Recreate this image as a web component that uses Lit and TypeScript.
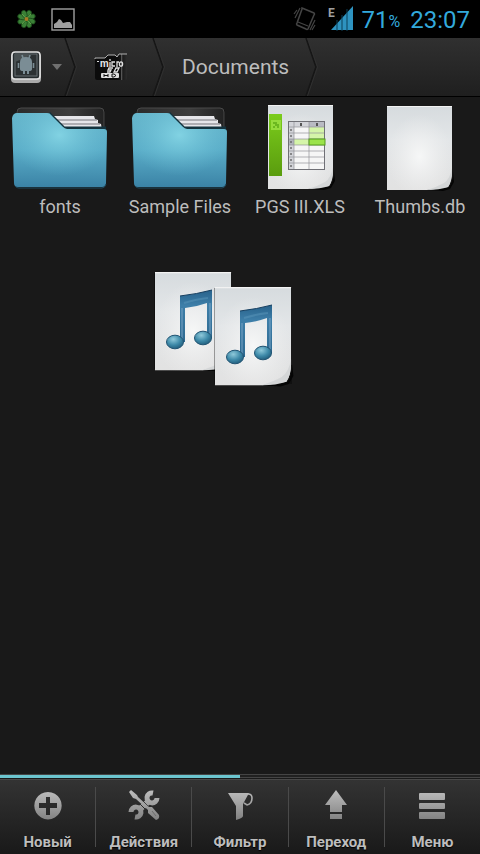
import { LitElement, html, svg, css, TemplateResult, SVGTemplateResult } from "lit";
import { customElement, property } from "lit/decorators.js";

type Kind = "folder" | "sheet" | "file";

const PAGE = "M0 0H65V66Q65 75 61 81Q50 83 40 84H0Z";

const folderIcon = () => svg`
  <rect x="4" y="9" width="89" height="78" rx="4" fill="#0a0a0a" opacity="0.6"></rect>
  <path d="M5 16V12Q5 8 9 8H88Q92 8 92 12V34H5Z" fill="url(#folder-back)" stroke="#4a4a4a" stroke-width="1"></path>
  <path d="M40 16H82L83 19L86 20V23L89 24L90 30H52Z" fill="#e6e6ea"></path>
  <path d="M44 20H85M47 24H88" stroke="#77777c" stroke-width="1"></path>
  <path d="M37 13L52 28H94" fill="none" stroke="#14333e" stroke-width="3"></path>
  <path d="M0 18Q1 13 5 13H35Q38 13 39 15L51 27Q53 29 55 29H92Q95 29 95 32L94 83Q94 87 90 87H6Q2 87 2 83Z" fill="url(#folder-front)"></path>
  <path d="M0 18Q1 13 5 13H35Q38 13 39 15L51 27Q53 29 55 29H92Q95 29 95 32L94 83Q94 87 90 87H6Q2 87 2 83Z" fill="url(#folder-glow)"></path>
  <path d="M3 86Q4 88 7 88H90Q93 88 94 84" fill="none" stroke="#1d4a5e" stroke-width="1"></path>`;

const page = () => svg`
  <path d="M40 84Q54 84 62 81Q66 76 66 66L67 76L63 83L56 85Z" fill="#050505"></path>
  <path d=${PAGE} fill="url(#paper)"></path>
  <path d=${PAGE} fill="url(#paper-glow)"></path>
  <path d="M65 62Q63 73 57 77Q50 81 40 84Q52 84 61 81Q65 75 65 66Z" fill="#d4d6d7"></path>
  <path d="M0 0.5H65" stroke="#f2f2f2" stroke-width="1"></path>`;

const sheetIcon = () => svg`
  <g transform="translate(16 5)">${page()}</g>
  <rect x="17" y="14" width="13" height="62" fill="url(#green)"></rect>
  <rect x="19" y="20" width="10" height="10" fill="#95dc3c"></rect>
  <path d="M21 22H25V24H27V28H25V26H23V28H21V26H23V24H21Z" fill="#6cb820"></path>
  <rect x="36" y="21" width="37" height="48" fill="#f6f6f6"></rect>
  <path d="M36 21H73V27H42V69H36Z" fill="#d3d4d9"></path>
  <rect x="57" y="21" width="16" height="6" fill="#b9bbc3"></rect>
  <rect x="36" y="39" width="6" height="6" fill="#b0b3ba"></rect>
  <rect x="57" y="27" width="16" height="12" fill="#d5f5a9"></rect>
  <rect x="42" y="39" width="15" height="6" fill="#d5f5a9"></rect>
  <path d="M36 27H73M36 33H73M36 39H73M36 45H73M36 51H73M36 57H73M36 63H73M42 21V69M57 21V69" stroke="#94949a" stroke-width="0.7"></path>
  <rect x="36.5" y="21.5" width="36" height="48" fill="none" stroke="#707076" stroke-width="1"></rect>
  <rect x="57" y="39" width="16" height="6" fill="#9be34a" stroke="#549b1c" stroke-width="1"></rect>
  <path d="M49 23V26M65 23V26" stroke="#555" stroke-width="2"></path>
  <path d="M39 29V67" stroke="#666" stroke-width="1.4" stroke-dasharray="2 4"></path>`;

const fileIcon = () => svg`<g transform="translate(15 6)">${page()}</g>`;

const musicPage = () => svg`
  <rect x="-1" y="1" width="78" height="96" fill="#000" opacity="0.35"></rect>
  <g transform="scale(1.17)">${page()}</g>
  <path d="M25 24Q42 22 57 18V66H52V31Q41 35 30 36V70H25Z" fill="url(#note)"></path>
  <path d="M27 36V68M55 31V64" stroke="#78a4c6" stroke-width="1"></path>
  <path d="M25 24Q42 22 57 18" stroke="#173f60" stroke-width="1" fill="none"></path>
  <path d="M29 31Q42 27 53 26" stroke="#5a95ba" stroke-width="2" fill="none" opacity="0.5"></path>
  <ellipse cx="20" cy="70" rx="8.500" ry="6.800" fill="url(#note-head)" stroke="#205372" stroke-width="1"></ellipse>
  <ellipse cx="48" cy="66" rx="8.500" ry="6.800" fill="url(#note-head)" stroke="#205372" stroke-width="1"></ellipse>`;

const gradients = svg`
  <linearGradient id="folder-back" x1="0" y1="0" x2="1" y2="0"><stop offset="0" stop-color="#2b2b2b"></stop><stop offset="0.6" stop-color="#3d3d3d"></stop><stop offset="1" stop-color="#222"></stop></linearGradient>
  <linearGradient id="folder-front" x1="0" y1="0" x2="0" y2="1"><stop offset="0" stop-color="#66b5cb"></stop><stop offset="0.5" stop-color="#5aadc8"></stop><stop offset="1" stop-color="#3b83a6"></stop></linearGradient>
  <radialGradient id="folder-glow" cx="0.5" cy="0.3" r="0.55"><stop offset="0" stop-color="#8adbe9" stop-opacity="0.8"></stop><stop offset="1" stop-color="#6cc0d6" stop-opacity="0"></stop></radialGradient>
  <linearGradient id="paper" x1="0" y1="0" x2="0" y2="1"><stop offset="0" stop-color="#d6dbde"></stop><stop offset="0.4" stop-color="#e3e6e8"></stop><stop offset="1" stop-color="#e2e2e2"></stop></linearGradient>
  <radialGradient id="paper-glow" cx="0.5" cy="0.6" r="0.5"><stop offset="0" stop-color="#f6f7f7"></stop><stop offset="1" stop-color="#f0f0f0" stop-opacity="0"></stop></radialGradient>
  <linearGradient id="green" x1="0" y1="0" x2="0" y2="1"><stop offset="0" stop-color="#7bcc1c"></stop><stop offset="1" stop-color="#5a9c0e"></stop></linearGradient>
  <linearGradient id="note" x1="0" y1="0" x2="0" y2="1"><stop offset="0" stop-color="#28628b"></stop><stop offset="0.3" stop-color="#3e7fa9"></stop><stop offset="1" stop-color="#2d688f"></stop></linearGradient>
  <radialGradient id="note-head" cx="0.4" cy="0.3" r="0.7"><stop offset="0" stop-color="#8fc9da"></stop><stop offset="0.6" stop-color="#3d89a8"></stop><stop offset="1" stop-color="#23607f"></stop></radialGradient>
  <linearGradient id="metal" gradientUnits="userSpaceOnUse" x1="0" y1="2" x2="0" y2="30"><stop offset="0" stop-color="#bcbcbc"></stop><stop offset="1" stop-color="#838383"></stop></linearGradient>`;

const pictures: Record<Kind, () => SVGTemplateResult> = {
  folder: folderIcon,
  sheet: sheetIcon,
  file: fileIcon,
};

const entries: { name: string; kind: Kind }[] = [
  { name: "fonts", kind: "folder" },
  { name: "Sample Files", kind: "folder" },
  { name: "PGS III.XLS", kind: "sheet" },
  { name: "Thumbs.db", kind: "file" },
];

const actions: { label: string; icon: SVGTemplateResult }[] = [
  {
    label: "Новый",
    icon: svg`<path fill-rule="evenodd" d="M16 3A13.7 13.7 0 1 1 15.99 3ZM14 8V14H7V19H14V26H18V19H25V14H18V8Z"></path>`,
  },
  {
    label: "Действия",
    icon: svg`
      <g fill="none" stroke="url(#metal)">
        <path d="M25 4A5 5 0 1 0 29 9" stroke-width="5"></path>
        <path d="M7 28A5 5 0 1 0 3 23" stroke-width="5"></path>
        <path d="M21 12L11 21" stroke-width="6"></path>
      </g>
      <path d="M14 11L22 19" stroke="#2a2a2a" stroke-width="1" fill="none"></path>
      <path d="M10 13L18 21" stroke="#2a2a2a" stroke-width="1" fill="none"></path>
      <path d="M1 3L3 1L9 6L10 8L21 18L24 18L31 26Q32 30 28 31L20 24V21L8 10L5 9Z"></path>
      <path d="M24 22L28 27" stroke="#6d6d6d" stroke-width="1" fill="none"></path>`,
  },
  {
    label: "Фильтр",
    icon: svg`
      <path d="M4 4H25L19 15V27Q19 29 12 31V17Z"></path>
      <path d="M24 5Q28 5 28 9Q28 15 23 16L20 14" fill="none" stroke="url(#metal)" stroke-width="1.600"></path>`,
  },
  { label: "Переход", icon: svg`<path d="M16 1L27 16H22V23H10V16H5ZM10 25H22V30H10Z"></path>` },
  {
    label: "Меню",
    icon: svg`<rect x="3" y="4" width="26" height="7" rx="1"></rect><rect x="3" y="14" width="26" height="6" rx="1"></rect><rect x="3" y="23" width="26" height="7" rx="1"></rect>`,
  },
];

const textReset = css`
  :host { font-family: Roboto, "Noto Sans", sans-serif; }
  button, a { font: inherit; color: inherit; text-decoration: none; background: none; border: 0; padding: 0; margin: 0; }
  svg { display: block; flex: none; }
`;

@customElement("status-bar")
export class StatusBar extends LitElement {
  static styles = [textReset, css`
    :host { display: flex; align-items: center; height: 38px; padding: 0 10px 0 17px; background: #000; color: #33a9dc; font-size: 24px; line-height: 40px; }
    .shot { margin-left: 15px; }
    .space { flex: 1; }
    .signal { margin: 0 8px 0 10px; }
    .percent { font-size: 16px; padding-top: 6px; }
    .clock { margin-left: 10px; }
    .reading { padding-top: 2px; }
    .net { font: bold 12px Roboto, sans-serif; }
  `];

  render() {
    return html`
      <svg width="19" height="20" viewBox="0 0 19 20" aria-label="Clover">
        <g fill="#3b8136" stroke="#1c4c1c" stroke-width="0.8">
          ${[22, 67, 112, 157, 202, 247, 292, 337].map((a) => svg`<ellipse cx="9.500" cy="4.500" rx="2.600" ry="3.800" transform="rotate(${a} 9.5 10)"></ellipse>`)}
        </g>
        <path d="M5 5L14 15M14 5L5 15" stroke="#77bb59" stroke-width="1" opacity="0.7"></path>
        <circle cx="9.500" cy="10" r="2" fill="#a77b25"></circle>
      </svg>
      <svg class="shot" width="24" height="24" viewBox="0 0 24 24" aria-label="Screenshot">
        <rect x="1" y="2" width="22" height="21" fill="none" stroke="#a0a0a0" stroke-width="1.400"></rect>
        <path d="M3 21V17L6 15L8 12L10 13L12 16L16 15L19 15L21 18V21Z" fill="#a0a0a0"></path>
      </svg>
      <span class="space"></span>
      <svg width="24" height="28" viewBox="0 0 24 28" aria-label="Vibrate">
        <g fill="none" stroke="#444" stroke-width="1.500">
          <path d="M9 3L21 8Q22 9 21 10L15 24Q14 25 13 24L4 20Q3 19 4 18L9 4Z"></path>
          <path d="M5 17L15 21M7 3L2 13M4 5L1 9M22 15L17 25M22 20L19 25" stroke-width="1.200"></path>
        </g>
      </svg>
      <svg class="signal" width="27" height="28" viewBox="0 0 27 28" aria-label="Signal">
        <text class="net" x="1" y="12" fill="#a0a0a0">E</text>
        <path d="M4 25L26 1V25Z" fill="#2e93c0"></path>
        <path d="M10 15V26M15 10V26M20 4V26" stroke="#0a4058" stroke-width="1"></path>
      </svg>
      <span class="reading">71</span><span class="percent">%</span><span class="clock reading">23:07</span>`;
  }
}

@customElement("path-bar")
export class PathBar extends LitElement {
  static styles = [textReset, css`
    :host { display: block; border-bottom: 1px solid #000; background: linear-gradient(#303030, #1f1f1f); color: #bdbdbd; }
    .trail { display: flex; align-items: center; height: 58px; }
    .root { display: flex; align-items: center; gap: 10px; padding: 0 2px 0 10px; }
    .card { padding: 0 23px 0 16px; }
    .brand { font: bold 10px Roboto, sans-serif; }
    .name { padding: 0 16px; font-size: 21px; line-height: 60px; }
  `];

  private divider() {
    return html`<svg width="14" height="58" viewBox="0 0 14 58" aria-hidden="true">
      <path d="M1 0L11 29L1 58" fill="none" stroke="#161616" stroke-width="1.600"></path>
      <path d="M2.500 0L12.500 29L2.500 58" fill="none" stroke="#303030" stroke-width="1"></path>
    </svg>`;
  }

  render() {
    return html`<nav class="trail" aria-label="Path">
      <button class="root" aria-label="Device">
        <svg width="32" height="34" viewBox="0 0 32 34">
          <rect x="1" y="3" width="30" height="30" rx="4" fill="#aaa"></rect>
          <rect x="2" y="2" width="28" height="27" rx="3" fill="#252b2d" stroke="#e2e2e2" stroke-width="1.600"></rect>
          <rect x="5" y="4" width="22" height="22" fill="#2c3133" stroke="#697175" stroke-width="1"></rect>
          <path d="M5 26V12L24 4H5Z" fill="#4a5153"></path>
          <g fill="#7b8d95">
            <path d="M10 12Q10 7 16 7Q22 7 22 12ZM10 12H22V19Q22 21 19 21V24H17V21H15V24H13V21Q10 21 10 19Z"></path>
            <path d="M8.500 13V18M23.500 13V18M12 5L13 8M20 5L19 8" stroke="#7b8d95" stroke-width="1.600"></path>
          </g>
        </svg>
        <svg width="10" height="6" viewBox="0 0 10 6"><path d="M0 0H10L5 6Z" fill="#707070"></path></svg>
      </button>
      ${this.divider()}
      <button class="card" aria-label="microSD">
        <svg width="35" height="30" viewBox="0 0 35 30">
          <linearGradient id="sd"><stop offset="0.7" stop-color="#0b0b0b"></stop><stop offset="0.8" stop-color="#151515"></stop><stop offset="0.83" stop-color="#5a5a5a"></stop><stop offset="0.87" stop-color="#1b1b1b"></stop><stop offset="1" stop-color="#2c2c2c"></stop></linearGradient>
          <path d="M1 6H11L14 3H21L23 5L25 2H33V26Q33 28 31 28H3Q1 28 1 26Z" fill="url(#sd)"></path>
          <path d="M1 7V6H11L14 3H21L23 5L25 2H33" fill="none" stroke="#b0b0b0" stroke-width="1"></path>
          <text class="brand" x="6" y="15" fill="#e4e4e4">m</text>
          <g fill="none" stroke="#e0e0e0" stroke-width="1.300">
            <path d="M16 10V15M16 7V9M21 10H18V14H21M23 15V10H25"></path>
            <ellipse cx="27" cy="12" rx="1.600" ry="2.200"></ellipse>
            <path d="M19 16H15L14 18H17L16 20H13M20 20L22 16H25L23 20Z"></path>
          </g>
          <rect x="7" y="21" width="18" height="5" rx="1" fill="#ddd"></rect>
          <path d="M10 22V25M14 22V25M10 23.500H14M18 22V25H20L22 23.500L20 22Z" stroke="#111" stroke-width="1" fill="none"></path>
          <rect x="3" y="9" width="2" height="1" fill="#ddd"></rect>
        </svg>
      </button>
      ${this.divider()}
      <a class="name" href="#documents">Documents</a>
      ${this.divider()}
    </nav>`;
  }
}

@customElement("tool-bar")
export class ToolBar extends LitElement {
  @property({ type: Number }) pages = 2;

  static styles = [textReset, css`
    :host { display: block; color: #bdbdbd; }
    .track { height: 2px; border-top: 1px solid #444; border-bottom: 1px solid #444; background: #202020; }
    .thumb { height: 3px; background: #6cc5cf; }
    .bar { display: flex; margin-top: 1px; height: 75px; box-sizing: border-box; border-top: 1px solid #484848; background: linear-gradient(#333, #191919); }
    .action { flex: 1; display: flex; flex-direction: column; align-items: center; gap: 12px; padding-top: 9px; font-size: 15px; line-height: 18px; font-weight: 700; text-shadow: 0 1px 1px #000; border-left: 1px solid; border-image: linear-gradient(transparent 8px, #4a4a4a 8px, #4a4a4a 66px, transparent 66px) 1; }
    .action:first-child { border: 0; }
    .glyph { fill: url(#metal); }
  `];

  render() {
    return html`
      <div class="track"><div class="thumb" style="width:${100 / this.pages}%"></div></div>
      <div class="bar" role="toolbar">
        ${actions.map((a) => html`<button class="action">
          <svg class="glyph" width="32" height="32" viewBox="0 0 32 32" aria-hidden="true"><defs>${gradients}</defs>${a.icon}</svg>
          <span>${a.label}</span>
        </button>`)}
      </div>`;
  }
}

@customElement("app-root")
export class AppRoot extends LitElement {
  static styles = [textReset, css`
    :host { display: flex; flex-direction: column; min-height: 100vh; background: #191919; color: #bdbdbd; }
    .files { position: relative; flex: 1; }
    .grid { display: grid; grid-template-columns: repeat(4, 1fr); padding-top: 3px; }
    .entry { display: flex; flex-direction: column; align-items: center; font-size: 18px; line-height: 22px; white-space: nowrap; }
    .dragged { position: absolute; left: 154px; top: 174px; }
  `];

  render(): TemplateResult {
    return html`
      <status-bar></status-bar>
      <path-bar></path-bar>
      <main class="files">
        <div class="grid">
          ${entries.map((e) => html`<button class="entry">
            <svg width="96" height="96" viewBox="0 0 96 96" aria-hidden="true"><defs>${gradients}</defs>${pictures[e.kind]()}</svg>
            <span>${e.name}</span>
          </button>`)}
        </div>
        <svg class="dragged" width="140" height="118" viewBox="0 0 140 118" aria-label="Music files">
          <g transform="translate(1 1)">${musicPage()}</g>
          <g transform="translate(61 16)">${musicPage()}</g>
        </svg>
      </main>
      <tool-bar .pages=${2}></tool-bar>`;
  }
}
